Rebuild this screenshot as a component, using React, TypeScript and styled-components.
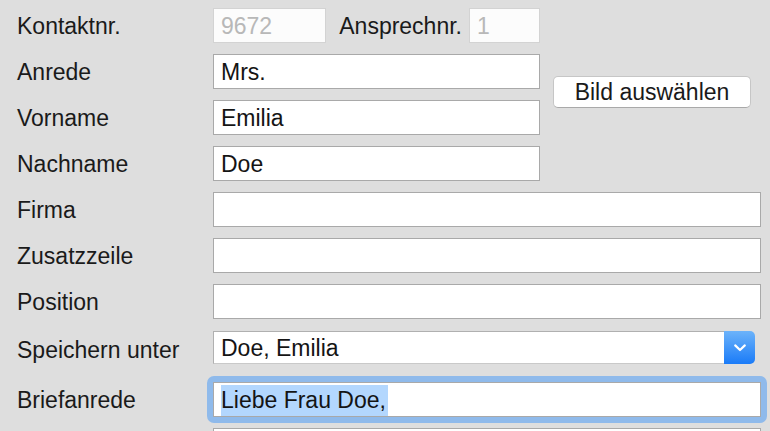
import React from "react";
import styled, { createGlobalStyle } from "styled-components";

const GlobalStyle = createGlobalStyle`
  html {
    background: #dedede;
    overflow: hidden;
  }
  body {
    margin: 0;
    padding: 0;
    overflow: hidden;
    font-family: "Liberation Sans", Helvetica, Arial, sans-serif;
    color: #1a1a1a;
  }
`;

const Form = styled.div`
  display: flex;
  flex-direction: column;
  padding: 8px 9px 0 17px;
`;

const TopGrid = styled.div`
  display: grid;
  grid-template-columns: 196px 327px auto;
  grid-auto-rows: 35px;
  row-gap: 11px;
  align-items: center;
`;

const Row = styled.div<{ $top: number; $height?: number }>`
  display: grid;
  grid-template-columns: 196px 1fr;
  align-items: center;
  height: ${(p) => p.$height ?? 35}px;
  margin-top: ${(p) => p.$top}px;
`;

const Label = styled.div<{ $shift?: number }>`
  font-size: 23px;
  line-height: 26px;
  white-space: nowrap;
  transform: translateY(${(p) => p.$shift ?? 0}px);
`;

const InlineLabel = styled(Label)`
  margin: 0 7px 0 auto;
`;

const Box = styled.div<{ $width?: number; $disabled?: boolean }>`
  box-sizing: border-box;
  flex-shrink: 0;
  height: 35px;
  width: ${(p) => (p.$width ? `${p.$width}px` : "100%")};
  background: ${(p) => (p.$disabled ? "#fcfcfc" : "#ffffff")};
  border: 1px solid ${(p) => (p.$disabled ? "#d3d3d3" : "#a9a9a9")};
  color: ${(p) => (p.$disabled ? "#b8b8b8" : "#141414")};
  font-size: 23px;
  line-height: 33px;
  padding: 1px 0 0 7px;
  white-space: nowrap;
  overflow: hidden;
`;

/* focused field: the blue ring sits behind the box */
const FocusBox = styled(Box)`
  position: relative;
  overflow: visible;
  &::before {
    content: "";
    position: absolute;
    inset: -7px;
    border-radius: 7px;
    background: #8fbaeb;
    z-index: -1;
  }
`;

const Selected = styled.span`
  background: #b3d7fe;
  padding: 2px 2px 3px 0;
`;

const NumberCell = styled.div`
  display: flex;
  align-items: center;
`;

const PictureButton = styled.button`
  grid-column: 3;
  grid-row: 2 / 4;
  align-self: start;
  margin: 22px 0 0 13px;
  box-sizing: border-box;
  width: 198px;
  height: 32px;
  background: #ffffff;
  border: 1px solid #c6c6c6;
  border-bottom-color: #a9a9a9;
  border-radius: 5px;
  font-family: inherit;
  font-size: 23px;
  color: #1a1a1a;
  padding: 0;
  line-height: 30px;
`;

const Select = styled.div`
  display: flex;
  width: 542px;
  height: 33px;
`;

const SelectValue = styled.div`
  box-sizing: border-box;
  flex: 1;
  background: #fff;
  border: 1px solid #b0b0b0;
  border-bottom-color: #c9c9c9;
  border-right: none;
  font-size: 23px;
  line-height: 31px;
  padding: 1px 0 0 7px;
  color: #141414;
`;

const SelectArrow = styled.div`
  width: 31px;
  height: 33px;
  border-radius: 0 5px 5px 0;
  background: linear-gradient(#6cb3fa, #1a7bf8);
  display: flex;
  align-items: center;
  justify-content: center;
`;

const Chevron = () => (
  <svg width="14" height="10" viewBox="0 0 14 10">
    <path d="M2.2 2.4 L7 7 L11.8 2.4" fill="none" stroke="#fff" strokeWidth="2.2" strokeLinecap="round" strokeLinejoin="round" />
  </svg>
);

const fullRows: { label: string; top: number }[] = [
  { label: "Firma", top: 11 },
  { label: "Zusatzzeile", top: 11 },
  { label: "Position", top: 11 },
];

export default function App() {
  return (
    <>
      <GlobalStyle />
      <Form>
        <TopGrid>
          <Label>Kontaktnr.</Label>
          <NumberCell>
            <Box $width={113} $disabled>9672</Box>
            <InlineLabel>Ansprechnr.</InlineLabel>
            <Box $width={71} $disabled>1</Box>
          </NumberCell>
          <div />
          <Label>Anrede</Label>
          <Box>Mrs.</Box>
          <PictureButton>Bild auswählen</PictureButton>
          <Label>Vorname</Label>
          <Box>Emilia</Box>
          <Label>Nachname</Label>
          <Box>Doe</Box>
        </TopGrid>
        {fullRows.map((r) => (
          <Row key={r.label} $top={r.top}>
            <Label>{r.label}</Label>
            <Box />
          </Row>
        ))}
        <Row $top={12} $height={33}>
          <Label $shift={2}>Speichern unter</Label>
          <Select>
            <SelectValue>Doe, Emilia</SelectValue>
            <SelectArrow>
              <Chevron />
            </SelectArrow>
          </Select>
        </Row>
        <Row $top={18}>
          <Label>Briefanrede</Label>
          <FocusBox>
            <Selected>Liebe Frau Doe,</Selected>
          </FocusBox>
        </Row>
        <Row $top={11}>
          <Label />
          <Box />
        </Row>
      </Form>
    </>
  );
}
